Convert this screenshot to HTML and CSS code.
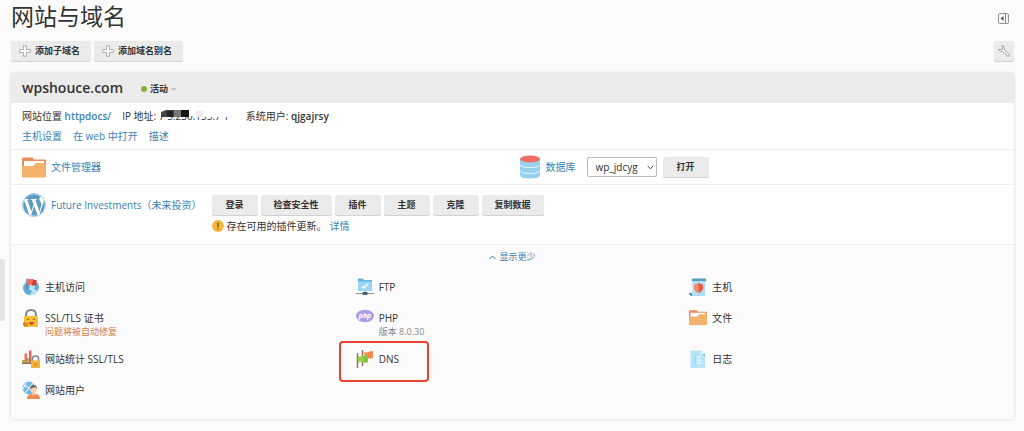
FILE: index.html
```html
<!DOCTYPE html>
<html lang="zh-CN">
<head>
<meta charset="UTF-8">
<title>网站与域名</title>
<meta name="viewport" content="width=device-width,initial-scale=1.0">
<link rel="stylesheet" href="styles.css">
</head>
<body>
<svg class="defs" aria-hidden="true">
  <symbol id="i-plus" viewBox="0 0 12 12"><path d="M4.5.7h3v3.8h3.8v3H7.5v3.8h-3V7.5H.7v-3h3.8z" fill="#f6f6f6" stroke="#a2a2a2" stroke-width=".8"/></symbol>
  <symbol id="i-folder" viewBox="0 0 24 21">
    <path d="M0 2Q0 .5 1.500 .5h9L12 2.500h10.500Q24 2.500 24 4v8H0z" fill="#ec8b5e"/>
    <path d="M2 4h20v7H2z" fill="#fff"/>
    <path d="M0 9h11l3-3h10v13q0 1.500-1.500 1.500h-21Q0 20.500 0 19z" fill="#f4b26a"/>
  </symbol>
</svg>

<button class="side-tab" aria-label="展开"></button>

<div class="page">
  <header class="page-head">
    <h1>网站与域名</h1>
    <button class="icon-btn" aria-label="面板">
      <svg width="11" height="11" viewBox="0 0 11 11"><rect x=".6" y=".6" width="9.800" height="9.800" rx="1" fill="#fff" stroke="#888"/><path d="M7.500 1v9" stroke="#888"/><path d="M5.500 3v5L2.500 5.500z" fill="#555"/></svg>
    </button>
  </header>

  <div class="toolbar">
    <button class="btn"><svg width="12" height="12"><use href="#i-plus"/></svg>添加子域名</button>
    <button class="btn"><svg width="12" height="12"><use href="#i-plus"/></svg>添加域名别名</button>
    <button class="btn btn-tool" aria-label="设置">
      <svg width="12" height="12" viewBox="0 0 12 12"><path d="M4.200 .8A3 3 0 0 1 6.500 4.800L11 9.400A1 1 0 0 1 9.300 11L4.700 6.500A3 3 0 0 1 .7 4.200L2.700 4.600 4.300 4.300 4.600 2.700z" fill="#f6f6f6" stroke="#888" stroke-width=".8" stroke-linejoin="round"/></svg>
    </button>
  </div>

  <main class="panel">
    <div class="panel-head">
      <h2>wpshouce.com</h2>
      <button class="status"><span class="dot"></span>活动<svg width="5" height="4" viewBox="0 0 5 4"><path d="M.5 1l2 2 2-2" fill="none" stroke="#888" stroke-width=".9"/></svg></button>
    </div>

    <div class="info">
      <p>
        <span>网站位置 <a href="#"><b>httpdocs/</b></a></span>
        <span>IP 地址: <span class="masked">7 5.230.155.7 1<svg width="74" height="10" viewBox="0 0 74 10"><path d="M0 0h70v7H44V6H0z" fill="#fff"/><path d="M2 2l5-2h23v7H2z" fill="#444"/><path d="M8 1h6v6H8z" fill="#222"/><path d="M15 0h7v7h-7z" fill="#777"/><path d="M22 0h8v7h-8z" fill="#151515"/><path d="M37 1h7v6h-7z" fill="#eee"/></svg></span></span>
        <span>系统用户: <b>qjgajrsy</b></span>
      </p>
      <p class="links"><a href="#">主机设置</a><a href="#">在 web 中打开</a><a href="#">描述</a></p>
    </div>

    <div class="row tools">
      <a class="tool" href="#"><svg width="24" height="21"><use href="#i-folder"/></svg>文件管理器</a>
      <div class="database">
        <label class="tool" for="db">
          <svg width="22" height="24" viewBox="0 0 22 24"><path d="M1 4v16q0 3.500 10 3.500T21 20V4z" fill="#98d0ef"/><path d="M1 9.500q1 3 10 3t10-3M1 15.500q1 3 10 3t10-3" fill="none" stroke="#e4f4fc"/><ellipse cx="11" cy="4" rx="10" ry="3.500" fill="#ee6f64"/></svg>
          数据库
        </label>
        <span class="select">
          <select id="db"><option>wp_jdcyg</option></select>
          <svg width="7" height="5" viewBox="0 0 7 5"><path d="M.7 .8l2.800 3 2.800-3" fill="none" stroke="#444"/></svg>
        </span>
        <button class="btn">打开</button>
      </div>
    </div>

    <div class="row wordpress">
      <a class="tool" href="#">
        <svg width="24" height="24" viewBox="0 0 24 24" fill="#5b9cc5"><path d="M21.469 6.825c.84 1.537 1.318 3.300 1.318 5.175 0 3.979-2.156 7.456-5.363 9.325l3.295-9.527c.615-1.540.82-2.771.82-3.864 0-.405-.026-.78-.070-1.110m-7.981.105c.647-.030 1.232-.105 1.232-.105.582-.075.514-.930-.067-.899 0 0-1.755.135-2.880.135-1.064 0-2.850-.150-2.850-.150-.585-.030-.661.855-.075.885 0 0 .54.061 1.125.090l1.680 4.605-2.370 7.080L5.354 6.900c.649-.030 1.234-.100 1.234-.100.585-.075.516-.930-.065-.896 0 0-1.746.138-2.874.138-.200 0-.438-.008-.690-.015C4.911 3.150 8.235 1.215 12 1.215c2.809 0 5.365 1.072 7.286 2.833-.046-.003-.091-.009-.141-.009-1.060 0-1.812.923-1.812 1.914 0 .89.513 1.643 1.060 2.531.411.720.89 1.643.89 2.977 0 .915-.354 1.994-.821 3.479l-1.075 3.585-3.900-11.610zM12 22.784c-1.059 0-2.081-.153-3.048-.437l3.237-9.406 3.315 9.087c.024.053.050.101.078.149-1.120.393-2.325.609-3.582.609M1.211 12c0-1.564.336-3.050.935-4.390L7.290 21.709C3.694 19.960 1.212 16.271 1.211 12"/><circle cx="12" cy="12" r="11.600" fill="none" stroke="#5b9cc5" stroke-width=".5"/></svg>
        Future Investments（未来投资）
      </a>
      <div class="wp-actions">
        <div class="buttons">
          <button class="btn">登录</button>
          <button class="btn">检查安全性</button>
          <button class="btn">插件</button>
          <button class="btn">主题</button>
          <button class="btn">克隆</button>
          <button class="btn">复制数据</button>
        </div>
        <p class="notice">
          <svg width="12" height="12" viewBox="0 0 12 12"><circle cx="6" cy="6" r="5.900" fill="#f3b83b"/><path d="M6 2.500v4.700M6 8.300v1.300" stroke="#68491a" stroke-width="1.200"/></svg>
          存在可用的插件更新。<a href="#">详情</a>
        </p>
      </div>
    </div>

    <div class="more">
      <a class="toggle" href="#"><svg width="7" height="5" viewBox="0 0 7 5"><path d="M.7 4l2.800-3 2.800 3" fill="none" stroke="currentColor"/></svg>显示更少</a>

      <div class="grid">
        <div class="item">
          <svg width="18" height="18" viewBox="0 0 18 18"><circle cx="9" cy="9.500" r="8" fill="#b9e3f8"/><path d="M1 9q2-4 4-4l3 3-1 3 3 2-2 4Q1 16 1 9zM12 2q5 3 5 8l-2 3-3-2 1-3-3-2z" fill="#62aedb"/><path d="M5 .5v11" stroke="#69747d" stroke-width="1.200"/><path d="M5.500 1H12v6H5.500z" fill="#ef7067"/><path d="M11 2h3.500v5.500H9.500z" fill="#d73d36"/></svg>
          <div>主机访问</div>
        </div>
        <div class="item">
          <svg width="18" height="18" viewBox="0 0 18 18"><path d="M2 .5h5L8 2h8v11H2z" fill="#69b7df"/><path d="M2 3.500h14V13H2z" fill="#9bd7f5"/><path d="M6 8l2 2 4-4" fill="none" stroke="#fff" stroke-width="1.400"/><path d="M0 15.500h18M9 13v3" stroke="#8a969d"/><path d="M7 14h4l1 1.500-1 1.500H7l-1-1.500z" fill="#53636d"/></svg>
          <div>FTP</div>
        </div>
        <div class="item">
          <svg width="18" height="18" viewBox="0 0 18 18"><path d="M3 .5h14v3H3z" fill="#579dbe"/><path d="M3.500 3H16v15H2V15h1.500z" fill="#ade0f6"/><path d="M0 15h3v3H2q-2-1-2-3z" fill="#4c91b5"/><path d="M5 7l4.500-2L14 7q1 6-4.500 8Q4 13 5 7z" fill="#f38b66"/><path d="M9.500 5L14 7q1 6-4.500 8z" fill="#e45b43"/></svg>
          <div>主机</div>
        </div>

        <div class="item">
          <svg width="18" height="18" viewBox="0 0 18 18"><path d="M4 9V6q0-5 5-5t5 5v3" fill="none" stroke="#7c8991" stroke-width="2"/><rect x="2" y="7" width="14" height="11" rx="1" fill="#f6bf35"/><path d="M5 10.500q1-1 2 0M11 10.500q1-1 2 0" fill="none" stroke="#7e5527"/><path d="M7 13h5q-.5 3-2.500 3T7 13z" fill="#d7452f"/><path d="M1 14l2-2v2h3v3q-4 2-5-1z" fill="#d58428"/></svg>
          <div>SSL/TLS 证书<small class="warn">问题将被自动修复</small></div>
        </div>
        <div class="item">
          <svg width="18" height="18" viewBox="0 0 18 18"><ellipse cx="9" cy="7" rx="9" ry="6.200" fill="#a99de6"/><text x="9" y="9" class="php" text-anchor="middle">php</text></svg>
          <div>PHP<small>版本 8.0.30</small></div>
        </div>
        <div class="item">
          <svg width="18" height="18" viewBox="0 0 24 24"><use href="#i-folder" width="24" height="21" y="1"/></svg>
          <div>文件</div>
        </div>

        <div class="item">
          <svg width="18" height="18" viewBox="0 0 18 18"><path d="M0 10h3v4H0z" fill="#8bc34a"/><path d="M2.500 3.500h2.500V14H2.500z" fill="#ec6b5e"/><path d="M5 8h2v6H5z" fill="#8bc34a"/><path d="M7 .5h2.500V14H7z" fill="#dc6259"/><path d="M0 13.500h9" stroke="#8b6a50"/><path d="M10.500 11V8.500q0-2.500 3-2.500t3 2.500V11" fill="none" stroke="#7c8991" stroke-width="1.500"/><rect x="9" y="10.500" width="9" height="7.500" rx=".5" fill="#f4b334"/><path d="M12 13h3v3h-3z" fill="#e69632"/></svg>
          <div>网站统计 SSL/TLS</div>
        </div>
        <div class="item marked">
          <svg width="18" height="18" viewBox="0 0 18 18"><path d="M6.500 0v16M1.500 3v15" stroke="#9c765d" stroke-width="1.500"/><path d="M7 2q3 1 5 0t5-1v7q-4 1-6 0z" fill="#f58b4a"/><path d="M2 6q3 1 5 0t5-1v7q-3 1-5 0t-5 1z" fill="#9ad04e"/><path d="M7 6q3-1 5-1v7q-3 1-5 0z" fill="#85c442"/></svg>
          <div>DNS</div>
        </div>
        <div class="item">
          <svg width="18" height="18" viewBox="0 0 18 18"><path d="M2 .5h10.500L16 4v14H2Q1.500 18 1.500 17V1z" fill="#b7e5fa"/><path d="M12.500 .5L16 4.500h-3.500z" fill="#fbfbfb"/><path d="M13 4h3v2.500z" fill="#78b9d8"/><path d="M5 7h2M5 10h2M5 13h2" stroke="#82c4e5"/><path d="M8 7h4M8 10h4M8 13h4" stroke="#fff"/></svg>
          <div>日志</div>
        </div>

        <div class="item">
          <svg width="18" height="18" viewBox="0 0 18 18"><circle cx="7" cy="7" r="6.500" fill="#70b9e2"/><path d="M2 4l5 3 4-5M7 7l-4 5M7 7l5 4M1 8l3-6" fill="none" stroke="#d9f1fc" stroke-width="1.200"/><path d="M5 18q0-5 5-5h3q5 0 5 5z" fill="#ef8a50"/><path d="M10 11h3v3l-1.500 1L10 14z" fill="#edb897"/><ellipse cx="11.500" cy="8.500" rx="3" ry="3.700" fill="#f7cfb1"/><path d="M8 8q0-4 4-4 3 0 3 4l-2-2z" fill="#75655c"/></svg>
          <div>网站用户</div>
        </div>
      </div>
    </div>
  </main>
</div>
</body>
</html>
```

FILE: styles.css
```css
:root{
  --c-bg:#fbfbfb;--c-card:#fff;--c-text:#333;--c-sub:#888;
  --c-link:#3a82b2;--c-grey:#ebebeb;--c-line:#eee;--c-warn:#d57b42;
}
*,::after{box-sizing:border-box}
body{
  margin:0;background:var(--c-bg);color:var(--c-text);
  font:10px/16px "Open Sans","Noto Sans CJK SC",sans-serif
}
h1,h2,p{margin:0}
svg{flex:none;display:block}
a{color:var(--c-link);text-decoration:none}
a:hover{text-decoration:underline}
b{font-weight:600}
button,select{font:inherit;color:inherit}
.defs{position:absolute;width:0;height:0}
.page{padding:0 10px 11px 11px}

.side-tab{
  position:absolute;left:0;top:259px;width:5px;height:62px;padding:0;
  border:0;border-radius:0 3px 3px 0;background:#e5e5e5
}
.page-head{display:flex;align-items:center;justify-content:space-between;height:36px;padding-right:5px}
h1{font-size:23px;line-height:30px;padding-bottom:5px;font-weight:400}
.icon-btn{padding:0;border:0;background:none}

.toolbar{display:flex;gap:3px;padding:5px 0 12px}
.btn{
  display:inline-flex;align-items:center;justify-content:center;gap:4px;
  min-width:46px;height:20px;padding:0 13px;border:0;border-radius:2px;
  background:var(--c-grey);box-shadow:0 1px 0 #d2d2d2;
  font-size:9px;line-height:16px;font-weight:600;white-space:nowrap
}
.toolbar .btn{padding:0 11px 0 8px}
.toolbar .btn-tool{min-width:20px;padding:0 4px;margin-left:auto}

.panel{background:var(--c-card);border-radius:3px;box-shadow:0 0 3px rgba(0,0,0,.18);overflow:hidden}
.panel-head{display:flex;align-items:center;gap:18px;height:30px;padding:0 11px;background:var(--c-grey)}
h2{font-size:14px;line-height:20px;font-weight:600}
.status{
  display:flex;align-items:center;gap:3px;padding:2px 0 0;border:0;background:none;
  font-size:9px;font-weight:600
}
.dot{width:6px;height:6px;border-radius:50%;background:#84b135}

.info{padding:3px 11px 3px}
.info p{display:flex;gap:11px;line-height:20px}
.masked{position:relative;display:inline-block;width:76px;height:20px;vertical-align:top;white-space:nowrap}
.masked svg{position:absolute;left:0;top:4px}

.row{border-top:1px solid var(--c-line);padding:0 11px}
.tools{display:grid;grid-template-columns:1fr 1fr;gap:12px;align-items:center;height:35px}
.tool{display:flex;align-items:center;gap:5px;color:var(--c-link);white-space:nowrap}
.database{display:flex;align-items:center;gap:6px}
.database .tool{margin-right:5px}
.select{position:relative}
select{
  display:block;width:70px;height:20px;padding:0 8px;border:1px solid #bbb;border-radius:2px;
  background:var(--c-card);appearance:none
}
.select svg{position:absolute;right:3px;top:8px;pointer-events:none}

.wordpress{display:flex;align-items:flex-start;gap:10px;padding-top:8px;height:60px}
.buttons{display:flex;gap:3px;padding-top:2px}
.notice{display:flex;align-items:center;gap:3px;padding-top:2px;line-height:18px}

.more{border-top:1px solid var(--c-line);background:var(--c-bg);padding:4px 11px 20px}
.toggle{display:flex;align-items:center;justify-content:center;gap:3px;font-size:9px}
.grid{display:grid;grid-template-columns:repeat(3,1fr);gap:13px 20px;padding-top:13px}
.item{position:relative;display:flex;gap:5px;line-height:18px}
.item small{display:block;font-size:9px;line-height:10px;color:var(--c-sub)}
.item .warn{color:var(--c-warn)}
.php{font-size:7px;font-weight:700;font-style:italic;fill:#fff}
/* highlight frame */
.marked::after{
  content:"";position:absolute;left:-17px;top:-9px;width:90px;height:41px;
  border:2px solid #e8432e;border-radius:4px
}
```
